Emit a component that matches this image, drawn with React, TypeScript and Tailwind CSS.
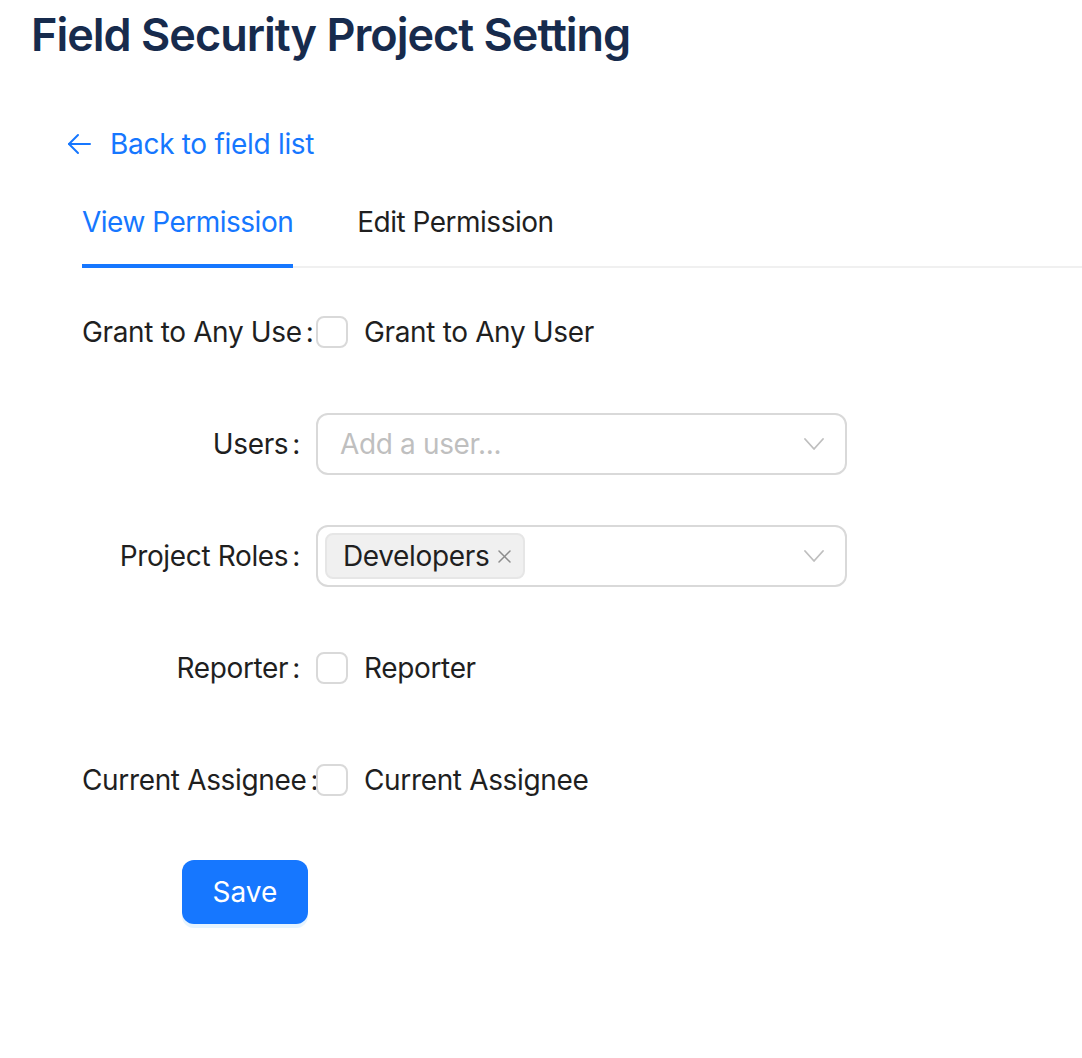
import React from "react";

function ArrowLeft() {
  return (
    <svg width="24" height="22" viewBox="0 0 24 22" fill="none" stroke="#1677ff" strokeWidth="2" strokeLinecap="round" strokeLinejoin="round">
      <path d="M23 11H2" />
      <path d="M11 2L2 11L11 20" />
    </svg>
  );
}

function ChevronDown() {
  return (
    <svg width="20" height="12" viewBox="0 0 20 12" fill="none" stroke="#bfbfbf" strokeWidth="1.8" strokeLinecap="round" strokeLinejoin="round">
      <path d="M1 1L10 11L19 1" />
    </svg>
  );
}

function CloseX() {
  return (
    <svg width="13" height="13" viewBox="0 0 13 13" fill="none" stroke="#8c8c8c" strokeWidth="1.5" strokeLinecap="round">
      <path d="M1 1L12 12M12 1L1 12" />
    </svg>
  );
}

function Label({ text, tight }: { text: string; tight?: boolean }) {
  return (
    <div
      className={
        tight
          ? "w-[234px] shrink-0 flex justify-start whitespace-nowrap text-[28px] leading-[44px] tracking-[-0.35px] text-[#1f1f1f]"
          : "w-[234px] shrink-0 flex justify-end whitespace-nowrap text-[28px] leading-[44px] tracking-[-0.35px] text-[#1f1f1f]"
      }
    >
      <span>{text}</span>
      <span className={tight ? "ml-[4px]" : "ml-[4px] mr-[16px]"}>:</span>
    </div>
  );
}

function Checkbox() {
  return <span className="w-[32px] h-[32px] shrink-0 rounded-[8px] border-2 border-[#d9d9d9] bg-white" />;
}

function CheckRow({ label, text, tight }: { label: string; text: string; tight?: boolean }) {
  return (
    <div className="flex items-center h-[64px] mb-[48px]">
      <Label text={label} tight={tight} />
      <div className="flex items-center">
        <Checkbox />
        <span className="ml-[16px] text-[28px] leading-[44px] tracking-[-0.35px] text-[#1f1f1f]">{text}</span>
      </div>
    </div>
  );
}

export default function App() {
  return (
    <div className="min-h-screen bg-white font-['Inter',sans-serif] antialiased">
      <div className="pt-[12px] pl-[31px]">
        <h1 className="text-[45px] leading-[45px] font-semibold tracking-[-1px] text-[#172b4d]">
          Field Security Project Setting
        </h1>
      </div>

      <div className="mt-[55px] h-[64px] pl-[67px] flex items-center">
        <ArrowLeft />
        <span className="ml-[19px] text-[28px] leading-[44px] tracking-[-0.3px] text-[#1677ff]">Back to field list</span>
      </div>

      <div className="ml-[82px] flex border-b-2 border-[#f0f0f0]">
        <div className="-mb-[2px] pt-[24px] pb-[20px] border-b-4 border-[#1677ff] text-[28px] leading-[44px] tracking-[-0.5px] text-[#1677ff]">
          View Permission
        </div>
        <div className="-mb-[2px] ml-[64px] pt-[24px] pb-[20px] border-b-4 border-transparent text-[28px] leading-[44px] tracking-[-0.5px] text-[#1f1f1f]">
          Edit Permission
        </div>
      </div>

      <div className="mt-[32px] pl-[82px]">
        <CheckRow label="Grant to Any Use" text="Grant to Any User" tight />

        <div className="flex items-center h-[64px] mb-[48px]">
          <Label text="Users" />
          <div className="w-[531px] h-[62px] rounded-[12px] border-2 border-[#d9d9d9] bg-white flex items-center pl-[22px] pr-[21px]">
            <span className="flex-1 text-[28px] leading-[44px] tracking-[-0.35px] text-[#bfbfbf]">Add a user...</span>
            <ChevronDown />
          </div>
        </div>

        <div className="flex items-center h-[64px] mb-[48px]">
          <Label text="Project Roles" />
          <div className="w-[531px] h-[62px] rounded-[12px] border-2 border-[#d9d9d9] bg-white flex items-center pl-[7px] pr-[21px]">
            <div className="flex-1 flex">
              <span className="h-[46px] flex items-center rounded-[8px] border-2 border-[#e6e6e6] bg-[#f0f0f0] pl-[16px] pr-[12px]">
                <span className="text-[28px] leading-[44px] tracking-[-0.35px] text-[#1f1f1f]">Developers</span>
                <span className="ml-[9px] flex items-center">
                  <CloseX />
                </span>
              </span>
            </div>
            <ChevronDown />
          </div>
        </div>

        <CheckRow label="Reporter" text="Reporter" />
        <CheckRow label="Current Assignee" text="Current Assignee" tight />

        <div className="ml-[100px]">
          <button className="h-[64px] w-[126px] rounded-[12px] bg-[#1677ff] text-white text-[28px] leading-[44px] shadow-[0_4px_0_rgba(5,145,255,0.1)]">
            Save
          </button>
        </div>
      </div>
    </div>
  );
}
